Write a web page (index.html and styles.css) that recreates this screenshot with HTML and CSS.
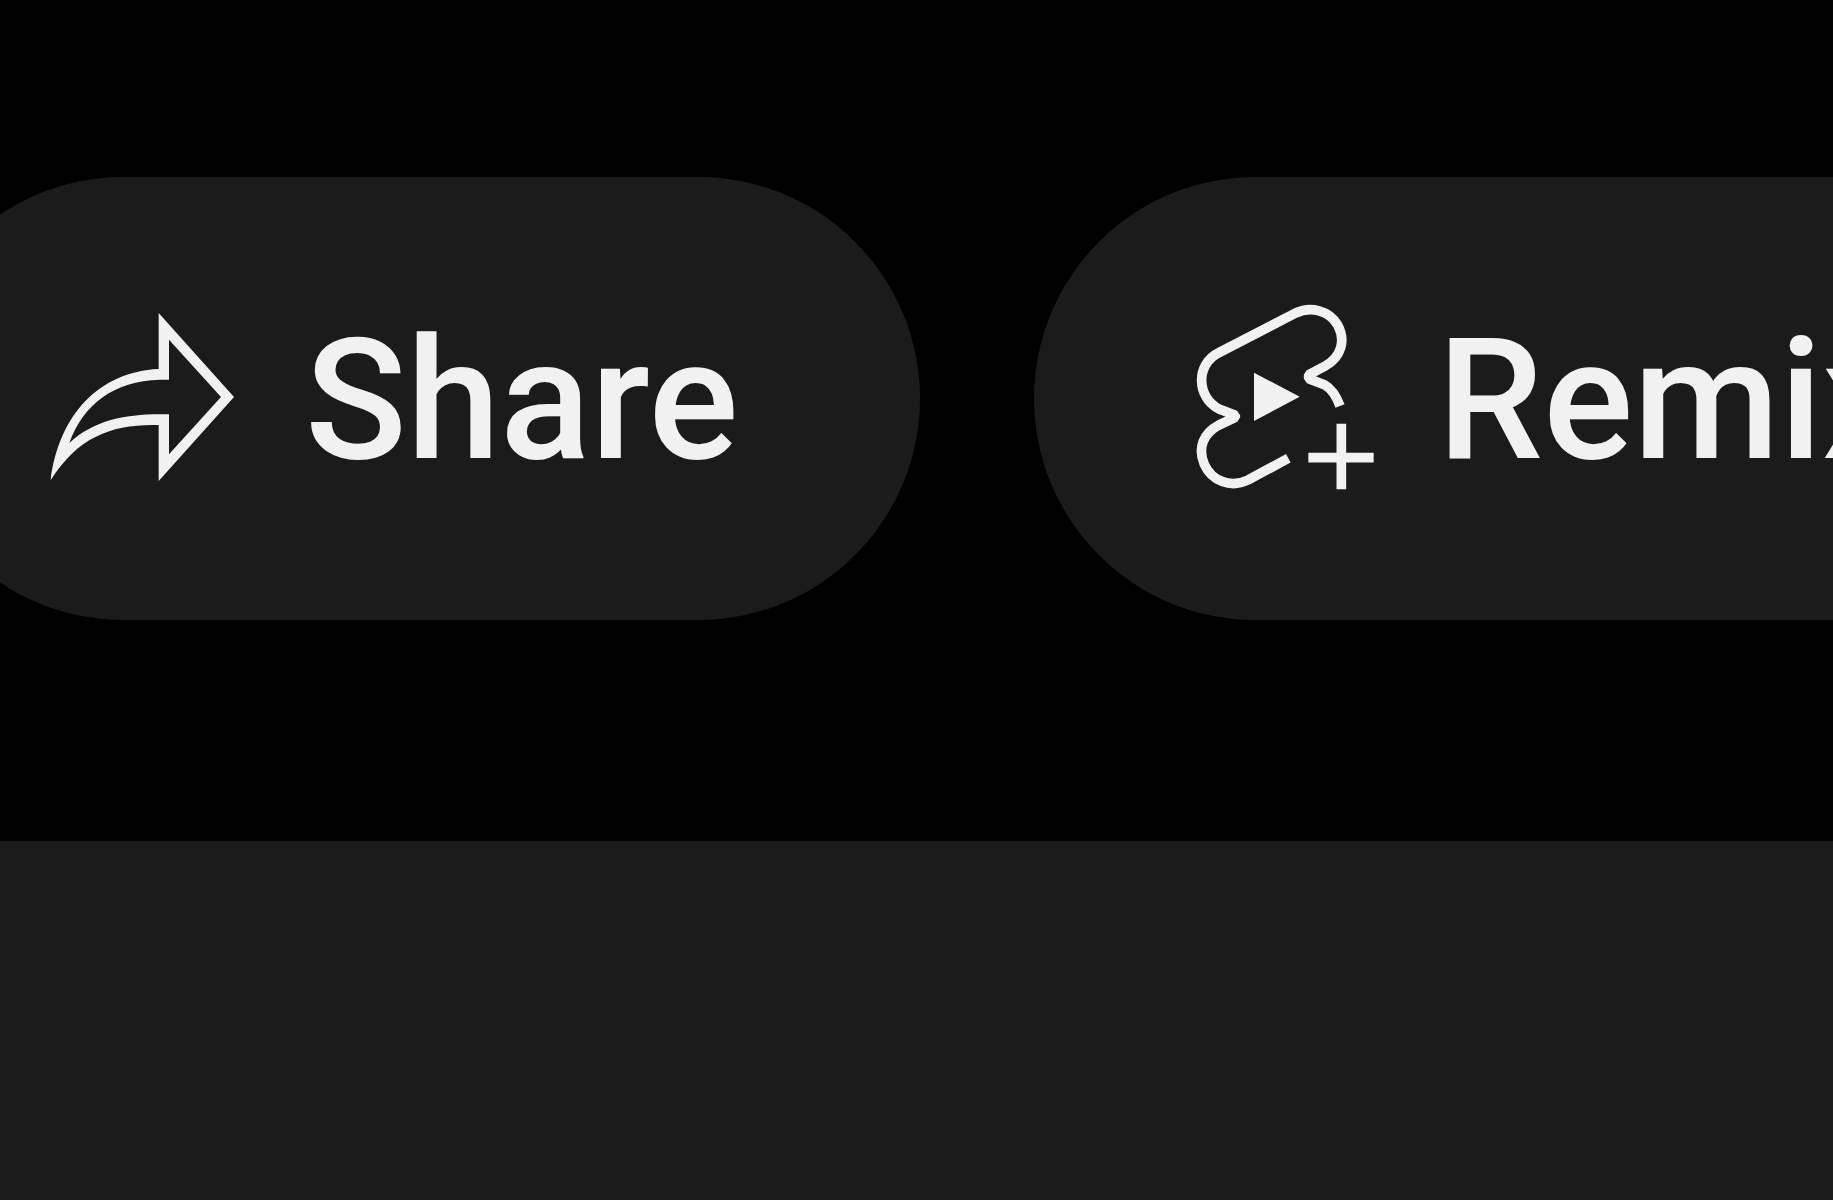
FILE: index.html
```html
<!DOCTYPE html>
<html lang="en">
	<head>
		<meta charset="UTF-8" />
		<meta name="viewport" content="width=device-width, initial-scale=1.0" />
		<title>Video actions</title>
		<link rel="stylesheet" href="styles.css">
	</head>
	<body>
		<div class="actions">
			<button class="action-button" type="button">
				<svg class="action-icon" viewBox="90 27 663 663" aria-hidden="true">
					<path
						fill="currentColor"
						fill-rule="evenodd"
						d="M476 96L702 348L476 600V432C340 428 235 465 152 598C176 405 295 272 476 264ZM507 176V296H480C340 300 250 370 208 486C280 420 370 400 480 400H507V520L663 348Z"
					/>
				</svg>
				<span>Share</span>
			</button>
			<button class="action-button" type="button">
				<svg class="action-icon" viewBox="-21 27 663 663" aria-hidden="true">
					<path
						class="icon-line"
						d="M358 532L237 597C185 622 128 600 106 550C85 500 103 457 150 432L199 409V403L150 384C83 350 78 250 150 215L380 96C425 75 480 88 506 132C532 180 515 228 470 254L419 281V293L466 311Q496 328 513 375"
					/>
					<path class="icon-line" d="M418 530H614M517 428V625" />
					<path fill="currentColor" d="M255 275L392 347L255 420Z" />
				</svg>
				<span>Remix</span>
			</button>
		</div>
		<main class="panel"></main>
	</body>
</html>
```

FILE: styles.css
```css
body {
	margin: 0;
	min-height: 100vh;
	display: flex;
	flex-direction: column;
	background-color: #000;
	font-family: Roboto, Arial, sans-serif;
	overflow: hidden;
}
/* the row is scrolled a little, so the first button is cut at the left */
.actions {
	display: flex;
	gap: 114px;
	margin-left: -98px;
	padding: 177px 0 221px;
}
.action-button {
	display: flex;
	align-items: center;
	flex-shrink: 0;
	gap: 54px;
	padding: 113px 182px 109px 128px;
	border: none;
	border-radius: 222px;
	background-color: #1b1b1b;
	color: #f1f1f1;
	font-family: inherit;
	font-size: 168px;
	font-weight: 500;
	line-height: 221px;
	white-space: nowrap;
	cursor: pointer;
}
.action-icon {
	width: 221px;
	height: 221px;
	flex-shrink: 0;
}
.icon-line {
	fill: none;
	stroke: currentColor;
	stroke-width: 29;
	stroke-linejoin: bevel;
}
.panel {
	flex: 1;
	background-color: #1b1b1b;
}
```
